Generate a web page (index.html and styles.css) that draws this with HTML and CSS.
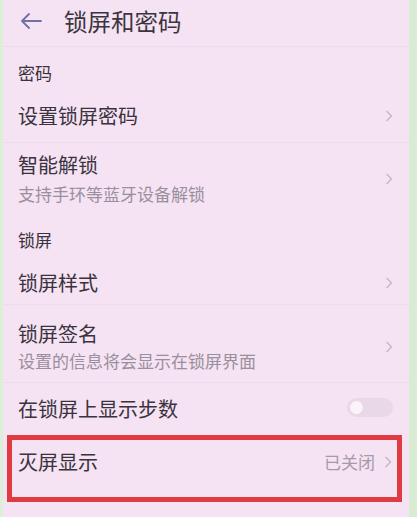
FILE: index.html
```html
<!DOCTYPE html>
<html lang="zh-CN">
<head>
<meta charset="utf-8">
<title>锁屏和密码</title>
<link rel="stylesheet" href="styles.css">
</head>
<body>
<div class="page">
  <header class="header">
    <svg class="back" width="22" height="16" viewBox="0 0 22 16">
      <path d="M21 8H2M9 1L2 8l7 7" fill="none" stroke="#6f72a6" stroke-width="1.8" stroke-linecap="round" stroke-linejoin="round"/>
    </svg>
    <div class="title">锁屏和密码</div>
  </header>

  <div class="section s1">密码</div>
  <div class="row r-single line">
    <div class="label">设置锁屏密码</div>
    <svg class="chev" width="8" height="12" viewBox="0 0 8 12"><path d="M1.5 1l5 5-5 5" fill="none" stroke="#c4b7c4" stroke-width="1.4"/></svg>
  </div>
  <div class="row r-double">
    <div class="texts">
      <div class="label">智能解锁</div>
      <div class="sub">支持手环等蓝牙设备解锁</div>
    </div>
    <svg class="chev" width="8" height="12" viewBox="0 0 8 12"><path d="M1.5 1l5 5-5 5" fill="none" stroke="#c4b7c4" stroke-width="1.4"/></svg>
  </div>

  <div class="section s2">锁屏</div>
  <div class="row r-style line">
    <div class="label">锁屏样式</div>
    <svg class="chev" width="8" height="12" viewBox="0 0 8 12"><path d="M1.5 1l5 5-5 5" fill="none" stroke="#c4b7c4" stroke-width="1.4"/></svg>
  </div>
  <div class="row r-double2 line">
    <div class="texts t2">
      <div class="label">锁屏签名</div>
      <div class="sub">设置的信息将会显示在锁屏界面</div>
    </div>
    <svg class="chev" width="8" height="12" viewBox="0 0 8 12"><path d="M1.5 1l5 5-5 5" fill="none" stroke="#c4b7c4" stroke-width="1.4"/></svg>
  </div>
  <div class="row r-toggle">
    <div class="label">在锁屏上显示步数</div>
    <div class="toggle"><div class="knob"></div></div>
  </div>

  <div class="highlight">
    <div class="row r-hl">
      <div class="label">灭屏显示</div>
      <div class="value">已关闭</div>
      <svg class="chev" width="8" height="12" viewBox="0 0 8 12"><path d="M1.5 1l5 5-5 5" fill="none" stroke="#c4b7c4" stroke-width="1.4"/></svg>
    </div>
  </div>
</div>
</body>
</html>
```

FILE: styles.css
```css
html, body {
  margin: 0;
  padding: 0;
}
body {
  width: 417px;
  height: 517px;
  overflow: hidden;
  font-family: "Noto Sans CJK SC", "Noto Sans", sans-serif;
  color: #3a333d;
}
.page {
  box-sizing: border-box;
  width: 417px;
  height: 517px;
  background: #f5e2f3;
  border-left: 3px solid #dcefd8;
  border-right: 8px solid #d8ecd4;
  display: flex;
  flex-direction: column;
}
.header {
  height: 47px;
  box-sizing: border-box;
  flex: none;
  display: flex;
  align-items: flex-start;
  padding-left: 17px;
  padding-top: 7px;
  border-bottom: 1px solid #eadaea;
}
.back {
  flex: none;
  margin-top: 6px;
}
.title {
  margin-left: 22px;
  font-size: 23.5px;
  line-height: 28px;
  color: #3b353f;
}
.section {
  font-size: 17px;
  line-height: 20px;
  padding-left: 15px;
  display: flex;
  align-items: center;
  flex: none;
  box-sizing: border-box;
}
.s1 {
  height: 42px;
  padding-top: 10px;
}
.s2 {
  height: 46px;
  padding-top: 4px;
}
.row {
  display: flex;
  align-items: center;
  padding-left: 15px;
  padding-right: 16px;
  flex: none;
  box-sizing: border-box;
}
.line {
  border-bottom: 1px solid #ecdcec;
}
.label {
  font-size: 20px;
  line-height: 24px;
  flex: 1;
}
.texts {
  flex: 1;
  display: flex;
  flex-direction: column;
  gap: 6px;
}
.texts.t2 {
  gap: 4px;
}
.texts .label {
  flex: none;
}
.sub {
  font-size: 17px;
  line-height: 22px;
  color: #9a8f9c;
}
.chev {
  flex: none;
}
.r-single {
  height: 54px;
}
.r-double {
  height: 72px;
}
.r-style {
  height: 44px;
}
.r-double2 {
  height: 78px;
  padding-top: 6px;
}
.r-toggle {
  height: 52px;
}
.toggle {
  width: 46px;
  height: 19px;
  border-radius: 10px;
  background: #e8d8e8;
  display: flex;
  align-items: center;
  padding-left: 3px;
  box-sizing: border-box;
  margin-top: -4px;
}
.knob {
  width: 13px;
  height: 13px;
  border-radius: 50%;
  background: #faf4fa;
}
.highlight {
  margin: 0 7px 0 4px;
  border: 5px solid #df3b40;
  height: 67px;
  box-sizing: border-box;
  flex: none;
}
.r-hl {
  height: 44px;
  padding-left: 6px;
  padding-right: 5px;
}
.value {
  font-size: 17px;
  line-height: 22px;
  color: #a59aa7;
  margin-right: 9px;
}
```
